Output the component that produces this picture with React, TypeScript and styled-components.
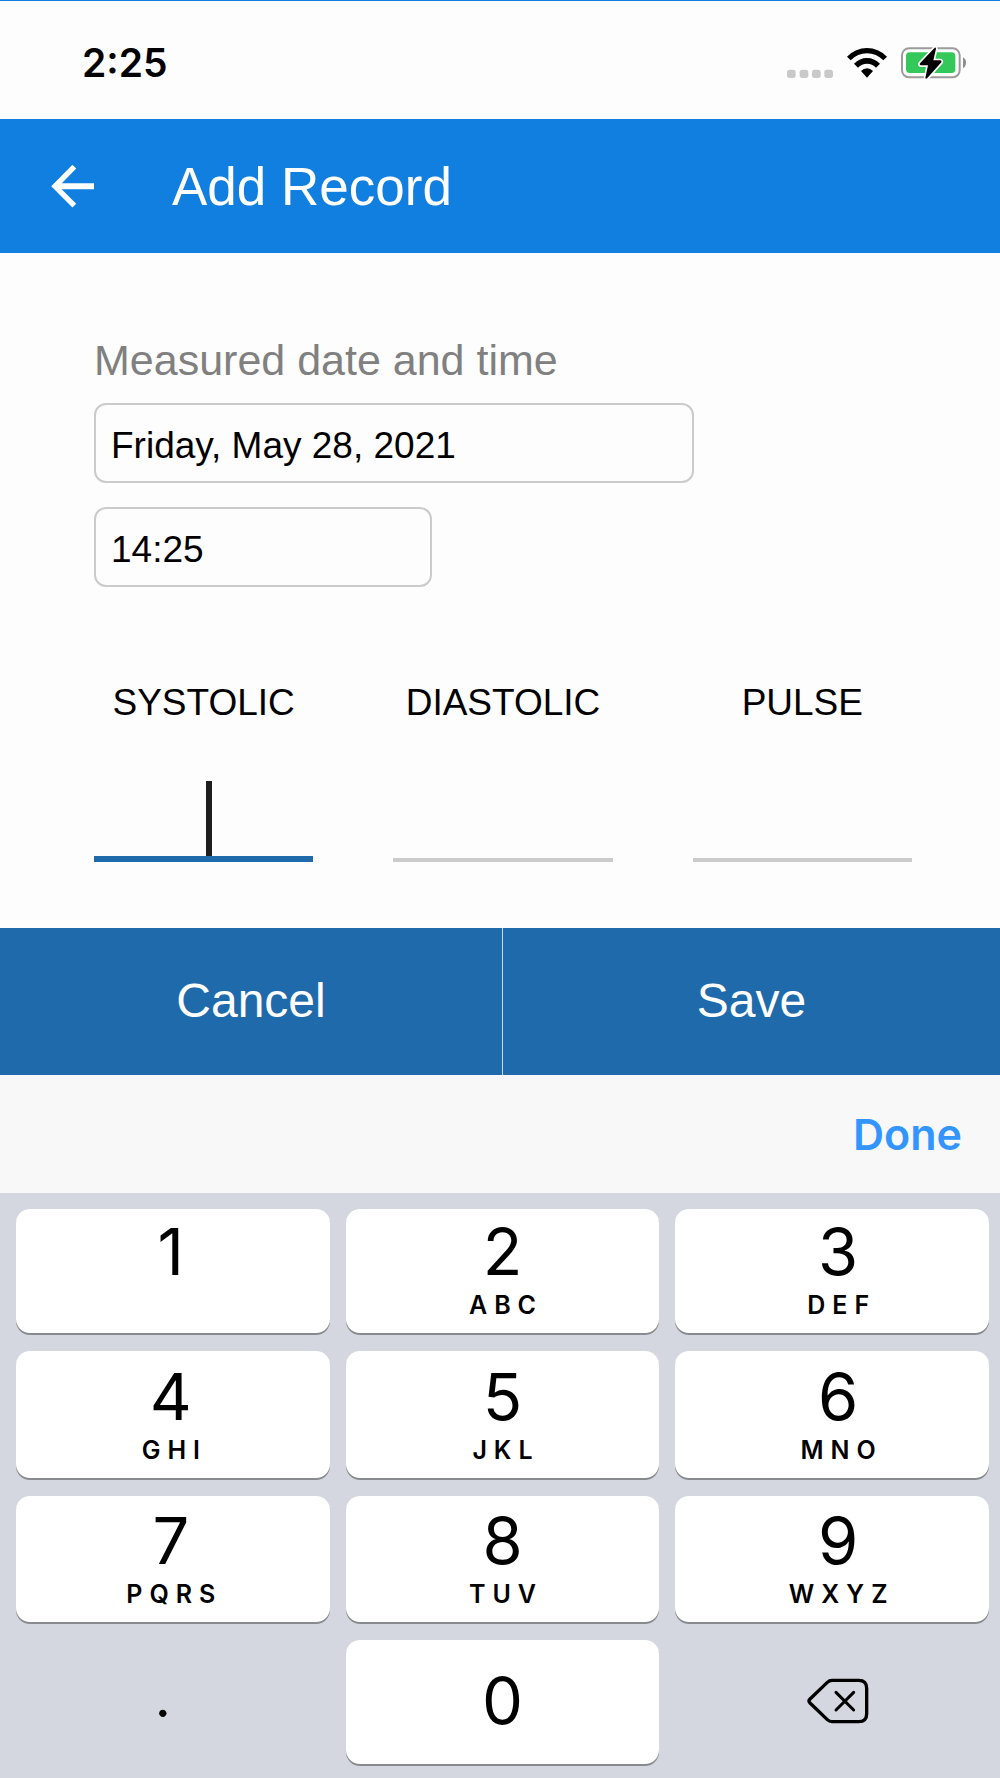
import React, { useState } from "react";
import styled, { createGlobalStyle } from "styled-components";

const GlobalStyle = createGlobalStyle`
  *, *::before, *::after { box-sizing: border-box; }
  body {
    margin: 0;
    background: #fdfdfd;
    color: #000;
    font-family: "Liberation Sans", Arial, sans-serif;
  }
  button, input { font-family: inherit; color: inherit; margin: 0; }
  button { border: 0; padding: 0; background: none; cursor: pointer; }
`;

const systemFont = `Inter, "Liberation Sans", sans-serif`;

const Screen = styled.div`
  display: flex;
  flex-direction: column;
  width: 100%;
`;

const StatusBar = styled.div`
  display: flex;
  align-items: center;
  justify-content: space-between;
  height: 119px;
  padding: 6px 34px 0 82px;
  border-top: 1px solid #117fdf;
`;

const Clock = styled.time`
  font: 600 39px/48px ${systemFont};
`;

const StatusIcons = styled.div`
  display: flex;
  align-items: center;
  gap: 14px;
`;

const AppBar = styled.header`
  display: flex;
  align-items: center;
  gap: 72px;
  height: 134px;
  padding: 0 45px;
  background: #117fdf;
  color: #fff;
`;

const BackButton = styled.button`
  display: flex;
  width: 55px;
  padding: 0 6px;
`;

const Title = styled.h1`
  margin: 0;
  padding-top: 2px;
  font-size: 53px;
  font-weight: 400;
  line-height: 64px;
`;

const Form = styled.form`
  display: flex;
  flex-direction: column;
`;

const Fields = styled.div`
  display: flex;
  flex-direction: column;
  padding: 83px 88px 66px 94px;
`;

const DateGroup = styled.fieldset`
  display: flex;
  flex-direction: column;
  gap: 24px;
  margin: 0;
  padding: 0;
  border: 0;
`;

const GroupLabel = styled.legend`
  padding: 0;
  margin-bottom: 19px;
  color: #808080;
  font-size: 43px;
  line-height: 48px;
`;

const BoxInput = styled.input<{ $width: number }>`
  width: 100%;
  max-width: ${(p) => p.$width}px;
  height: 80px;
  padding: 5px 15px 0;
  border: 2px solid #cbcbcb;
  border-radius: 12px;
  background: transparent;
  font-size: 37px;
  outline: none;
`;

const Readings = styled.div`
  display: grid;
  grid-template-columns: repeat(3, 1fr);
  gap: 80px;
  margin-top: 94px;
`;

const Reading = styled.div`
  position: relative;
  display: flex;
  flex-direction: column;
  gap: 56px;
`;

const ReadingLabel = styled.label`
  text-align: center;
  font-size: 37px;
  line-height: 44px;
`;

const ReadingInput = styled.input<{ $active: boolean }>`
  width: 100%;
  height: 81px;
  padding: 0;
  border: 0;
  border-bottom: ${(p) => (p.$active ? "6px solid #1f6aab" : "4px solid #cbcbcb")};
  background: transparent;
  text-align: center;
  font-size: 64px;
  outline: none;
  caret-color: transparent;
`;

const Caret = styled.span`
  position: absolute;
  left: 51%;
  bottom: 6px;
  width: 6px;
  height: 75px;
  background: #1e1e1e;
`;

const Actions = styled.div`
  display: grid;
  grid-template-columns: 502fr 498fr;
  background: #1f6aab;
`;

const ActionButton = styled.button`
  height: 147px;
  padding-bottom: 2px;
  color: #fff;
  font-size: 48px;
  line-height: 56px;

  & + & { border-left: 1px solid #c4d8e8; }
`;

const Accessory = styled.div`
  display: flex;
  align-items: center;
  justify-content: flex-end;
  height: 118px;
  padding: 0 38px;
  background: #f8f8f8;
`;

const DoneButton = styled.button`
  color: #3395ff;
  font: 600 43px/52px ${systemFont};
`;

const Keypad = styled.div`
  display: grid;
  grid-template-columns: repeat(3, 1fr);
  grid-template-rows: 124px 127px 126px 124px;
  gap: 18px 16px;
  padding: 16px 11px 14px 16px;
  background: #d4d7df;
`;

const Key = styled.button<{ $plain?: boolean; $centered?: boolean }>`
  display: flex;
  flex-direction: column;
  align-items: center;
  justify-content: ${(p) => (p.$centered ? "center" : "flex-end")};
  padding-bottom: ${(p) => (p.$centered ? 3 : 10)}px;
  border-radius: 14px;
  background: ${(p) => (p.$plain ? "transparent" : "#fff")};
  box-shadow: ${(p) => (p.$plain ? "none" : "0 2px 0 #898a8e")};
  font-family: ${systemFont};

  &:nth-child(3n) { padding-left: 12px; }
  &:nth-child(3n + 1) { padding-right: 4px; }
`;

const DecimalKey = styled(Key)`
  && { padding: 0 20px 10px 0; }
`;

const Digit = styled.span<{ $small?: boolean }>`
  font-size: ${(p) => (p.$small ? 56 : 65)}px;
  line-height: 70px;
`;

const Letters = styled.span`
  height: 36px;
  padding-left: 7px;
  font-size: 25px;
  font-weight: 600;
  line-height: 36px;
  letter-spacing: 7px;
`;

const keys = [
  ["1", ""],
  ["2", "ABC"],
  ["3", "DEF"],
  ["4", "GHI"],
  ["5", "JKL"],
  ["6", "MNO"],
  ["7", "PQRS"],
  ["8", "TUV"],
  ["9", "WXYZ"],
];

const fields = ["SYSTOLIC", "DIASTOLIC", "PULSE"];

const Signal = () => (
  <svg width="46" height="30" viewBox="0 0 138 90" fill="#c9c9c9" aria-hidden="true">
    {[0, 38, 75, 112].map((x) => (
      <rect key={x} x={x} y="65" width="26" height="25" rx="8" />
    ))}
  </svg>
);

const Wifi = () => (
  <svg width="40" height="30" viewBox="0 0 120 90" aria-hidden="true">
    <path d="M0 26Q26 0 60 0Q94 0 120 26L109 37Q88 16 60 16Q32 16 11 37Z" />
    <path d="M21 47Q38 30 60 30Q82 30 99 47L87 59Q76 47 60 47Q44 47 33 59Z" />
    <path d="M42 69Q50 61 60 61Q70 61 78 69L60 89Z" />
  </svg>
);

const Battery = () => (
  <svg width="65" height="32" viewBox="0 0 195 96" aria-hidden="true">
    <rect x="3" y="4" width="173" height="87" rx="21" fill="#fff" stroke="#9b9b9b" strokeWidth="6" />
    <rect x="15" y="16" width="148" height="62" rx="11" fill="#34c759" />
    <path d="M186 31Q195 36 195 47Q195 58 186 64Z" fill="#8e8e8e" />
    <path
      d="M101 2L57 49Q54 55 61 55H81L73 93Q75 97 79 93L121 46Q123 40 116 40H97L105 5Q104 0 101 2Z"
      fill="#000"
      stroke="#fff"
      strokeWidth="10"
      strokeLinejoin="round"
      paintOrder="stroke"
    />
  </svg>
);

const BackArrow = () => (
  <svg width="43" height="43" viewBox="0 0 129 129" fill="none" stroke="currentColor" aria-hidden="true">
    <path d="M70 5L12 64L70 122" strokeWidth="16" />
    <path d="M12 64H129" strokeWidth="18" />
  </svg>
);

const DeleteIcon = () => (
  <svg width="62" height="46" viewBox="0 0 186 138" fill="none" stroke="#000" strokeLinecap="round" strokeLinejoin="round" aria-hidden="true">
    <path d="M75 7H155Q179 7 179 31V107Q179 131 155 131H75Q67 131 61 125L9 75Q3 69 9 63L61 13Q67 7 75 7Z" strokeWidth="10" />
    <path d="M87 43L140 96M140 43L87 96" strokeWidth="9" />
  </svg>
);

export default function App() {
  const [date, setDate] = useState("Friday, May 28, 2021");
  const [time, setTime] = useState("14:25");
  const [active, setActive] = useState("SYSTOLIC");
  const [values, setValues] = useState<Record<string, string>>({});

  const setValue = (text: string) => setValues((v) => ({ ...v, [active]: text }));
  const current = values[active] ?? "";

  return (
    <Screen>
      <GlobalStyle />
      <StatusBar>
        <Clock>2:25</Clock>
        <StatusIcons>
          <Signal />
          <Wifi />
          <Battery />
        </StatusIcons>
      </StatusBar>

      <AppBar>
        <BackButton type="button" aria-label="Back">
          <BackArrow />
        </BackButton>
        <Title>Add Record</Title>
      </AppBar>

      <Form onSubmit={(e) => e.preventDefault()}>
        <Fields>
          <DateGroup>
            <GroupLabel>Measured date and time</GroupLabel>
            <BoxInput $width={600} aria-label="Date" value={date} onChange={(e) => setDate(e.target.value)} />
            <BoxInput $width={338} aria-label="Time" value={time} onChange={(e) => setTime(e.target.value)} />
          </DateGroup>
          <Readings>
            {fields.map((name) => (
              <Reading key={name}>
                <ReadingLabel htmlFor={name}>{name}</ReadingLabel>
                <ReadingInput
                  id={name}
                  inputMode="none"
                  $active={active === name}
                  value={values[name] ?? ""}
                  onFocus={() => setActive(name)}
                  onChange={(e) => setValues({ ...values, [name]: e.target.value })}
                />
                {active === name && !values[name] && <Caret />}
              </Reading>
            ))}
          </Readings>
        </Fields>
        <Actions>
          <ActionButton type="button">Cancel</ActionButton>
          <ActionButton type="submit">Save</ActionButton>
        </Actions>
      </Form>

      <Accessory>
        <DoneButton type="button">Done</DoneButton>
      </Accessory>
      <Keypad>
        {keys.map(([digit, letters]) => (
          <Key key={digit} type="button" onClick={() => setValue(current + digit)}>
            <Digit>{digit}</Digit>
            <Letters>{letters}</Letters>
          </Key>
        ))}
        <DecimalKey type="button" $plain $centered onClick={() => setValue(current + ".")}>
          <Digit $small>.</Digit>
        </DecimalKey>
        <Key type="button" $centered onClick={() => setValue(current + "0")}>
          <Digit>0</Digit>
        </Key>
        <Key type="button" $plain $centered aria-label="Delete" onClick={() => setValue(current.slice(0, -1))}>
          <DeleteIcon />
        </Key>
      </Keypad>
    </Screen>
  );
}
